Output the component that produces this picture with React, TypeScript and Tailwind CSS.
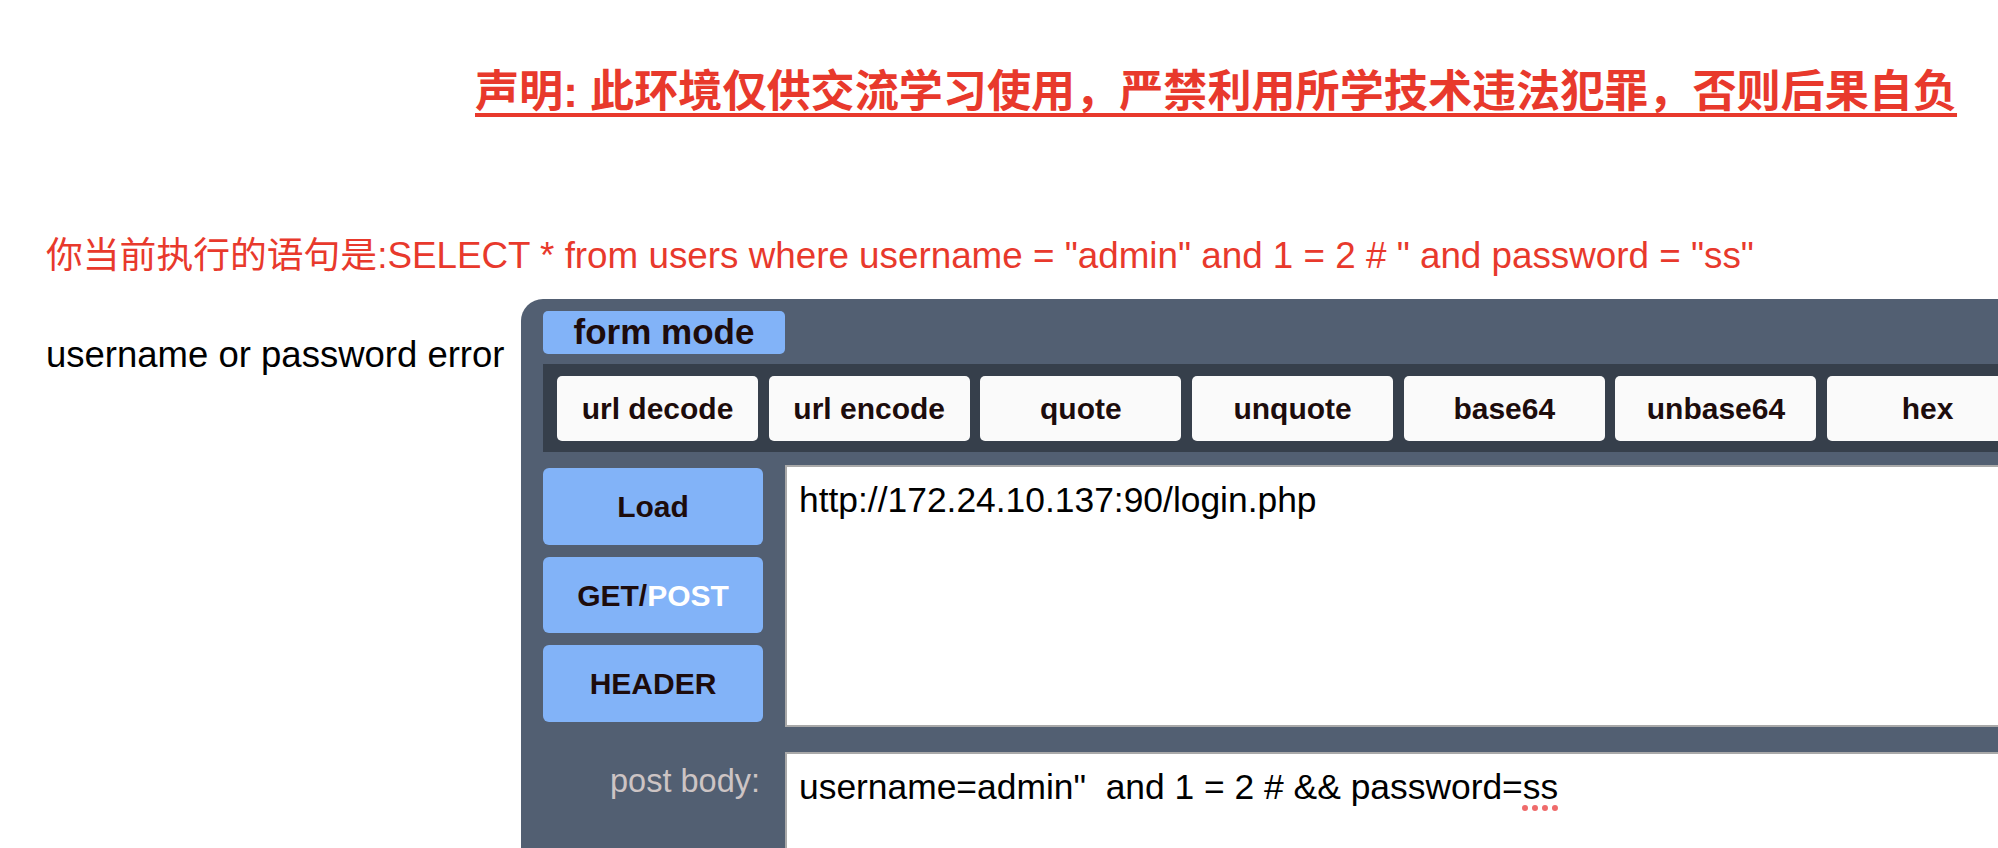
const tools = ["url decode", "url encode", "quote", "unquote", "base64", "unbase64", "hex"];

export default function App() {
  return (
    <div className="relative w-[1998px] h-[848px] overflow-hidden bg-white font-['Liberation_Sans','Noto_Sans_CJK_SC',sans-serif]">
      {/* notice */}
      <div className="h-[231px] pt-[67px] pl-[475px]">
        <span className="text-[44.1px] leading-[50px] font-bold text-[#e8392c] underline decoration-[4px] underline-offset-[6px] whitespace-nowrap">
          声明: 此环境仅供交流学习使用，严禁利用所学技术违法犯罪，否则后果自负
        </span>
      </div>

      <div className="h-[50px] pl-[46px] text-[36.8px] leading-[50px] text-[#e8392c] whitespace-nowrap">
        你当前执行的语句是:SELECT * from users where username = "admin" and 1 = 2 # " and password = "ss"
      </div>

      <div className="mt-[18px] flex">
        <div className="w-[521px] shrink-0 pl-[46px] pt-[31px] text-[36.5px] leading-[50px] text-black whitespace-nowrap">
          username or password error
        </div>

        {/* hackbar panel */}
        <div className="w-[1700px] h-[620px] shrink-0 rounded-tl-[22px] bg-[#525f72] pt-[12px] pl-[22px]">
          <div className="w-[242px] h-[43px] rounded-[5px] bg-[#82b3f8] flex items-center justify-center text-[35px] font-bold text-[#1d0c0c]">
            form mode
          </div>

          <div className="mt-[10px] h-[88px] bg-[#363f4b] flex items-center gap-[10.7px] px-[14px]">
            {tools.map((t) => (
              <div
                key={t}
                className="w-[201px] h-[65px] shrink-0 rounded-[5px] bg-[#fafafa] flex items-center justify-center text-[30px] font-bold text-[#1d0c0c]"
              >
                {t}
              </div>
            ))}
          </div>

          <div className="mt-[13px] flex gap-[22px]">
            <div className="w-[220px] shrink-0 pt-[3px] flex flex-col gap-[12px]">
              <div className="h-[77px] rounded-[6px] bg-[#82b3f8] flex items-center justify-center text-[30px] font-bold text-[#1d0c0c]">
                Load
              </div>
              <div className="h-[76px] rounded-[6px] bg-[#82b3f8] flex items-center justify-center text-[30px] font-bold text-[#1d0c0c]">
                GET/<span className="text-white">POST</span>
              </div>
              <div className="h-[77px] rounded-[6px] bg-[#82b3f8] flex items-center justify-center text-[30px] font-bold text-[#1d0c0c]">
                HEADER
              </div>
            </div>
            <div className="flex-1 h-[262px] border-2 border-[#a9a9a9] bg-white p-[12px] text-[35.4px] leading-[42px] text-black whitespace-pre">
              http://172.24.10.137:90/login.php
            </div>
          </div>

          <div className="mt-[25px] flex gap-[22px]">
            <div className="w-[220px] shrink-0 pr-[3px] pt-[8px] text-right text-[32.5px] leading-[42px] text-[#cdc4c4]">
              post body:
            </div>
            <div className="flex-1 h-[200px] border-2 border-[#a9a9a9] bg-white p-[12px] text-[35.4px] leading-[42px] text-black whitespace-pre">
              username=admin"  and 1 = 2 # &amp;&amp; password=
              <span className="underline decoration-dotted decoration-[#ef6b6b] decoration-[6px] underline-offset-[6px]">ss</span>
            </div>
          </div>
        </div>
      </div>
    </div>
  );
}
